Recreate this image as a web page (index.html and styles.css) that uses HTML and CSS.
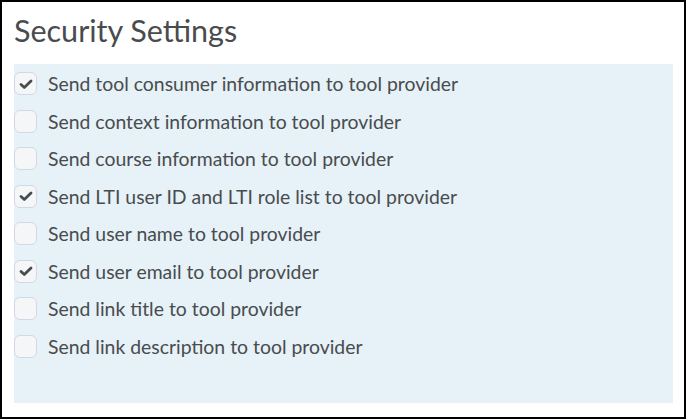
FILE: index.html
```html
<!DOCTYPE html>
<html lang="en">
<head>
    <meta charset="UTF-8">
    <title>Security Settings</title>
    <link rel="stylesheet" href="styles.css">
</head>
<body>
    <div class="settings-box">
        <h2>Security Settings</h2>

        <div class="options">
            <label class="option">
                <span class="box checked"><svg viewBox="0 0 16 16"><path d="M3 8.5 L6.3 11.5 L13 5"></path></svg></span>
                Send tool consumer information to tool provider
            </label>
            <label class="option">
                <span class="box"></span>
                Send context information to tool provider
            </label>
            <label class="option">
                <span class="box"></span>
                Send course information to tool provider
            </label>
            <label class="option">
                <span class="box checked"><svg viewBox="0 0 16 16"><path d="M3 8.5 L6.3 11.5 L13 5"></path></svg></span>
                Send LTI user ID and LTI role list to tool provider
            </label>
            <label class="option">
                <span class="box"></span>
                Send user name to tool provider
            </label>
            <label class="option">
                <span class="box checked"><svg viewBox="0 0 16 16"><path d="M3 8.5 L6.3 11.5 L13 5"></path></svg></span>
                Send user email to tool provider
            </label>
            <label class="option">
                <span class="box"></span>
                Send link title to tool provider
            </label>
            <label class="option">
                <span class="box"></span>
                Send link description to tool provider
            </label>
        </div>
    </div>
</body>
</html>
```

FILE: styles.css
```css
/* General */
body {
    margin: 0;
    font-family: 'Lato', 'Open Sans', sans-serif;
    color: #494c4e;
    background-color: #ffffff;
}

/* Outer frame */
.settings-box {
    width: 686px;
    height: 419px;
    box-sizing: border-box;
    border: 2px solid #000000;
    padding: 0 11px 14px 12px;
    display: flex;
    flex-direction: column;
}

h2 {
    font-size: 30.5px;
    font-weight: 400;
    margin: 0;
    padding-top: 10px;
    height: 62px;
    box-sizing: border-box;
    line-height: 36px;
}

/* Option list */
.options {
    flex: 1;
    background-color: #e6f1f8;
    padding-top: 8px;
    display: flex;
    flex-direction: column;
    gap: 14.5px;
}

.option {
    display: flex;
    align-items: center;
    gap: 11px;
    height: 23px;
    font-size: 19.4px;
}

.box {
    width: 23px;
    height: 23px;
    box-sizing: border-box;
    border: 1px solid #d3d9e3;
    border-radius: 6px;
    background-color: #f5f6f8;
    display: flex;
    align-items: center;
    justify-content: center;
    flex-shrink: 0;
}

.box svg {
    width: 16px;
    height: 16px;
    fill: none;
    stroke: #494c4e;
    stroke-width: 2.8;
    stroke-linecap: round;
    stroke-linejoin: round;
}
```
